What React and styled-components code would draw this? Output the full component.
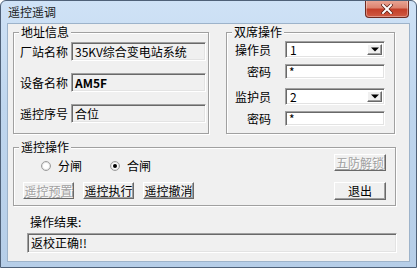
import React from "react";
import styled, { createGlobalStyle } from "styled-components";

const Global = createGlobalStyle`
  html, body { margin: 0; padding: 0; background: #ffffff; }
  body { font-family: "Noto Sans CJK SC", "Noto Sans", sans-serif; font-size: 12px; color: #000; }
  * { box-sizing: border-box; }
`;

const Window = styled.div`
  width: 417px;
  height: 268px;
  border: 1px solid #4f6178;
  border-radius: 6px 6px 0 0;
  background: linear-gradient(#cfe2f6 0%, #bfd6ee 40%, #b6cee8 100%);
  padding: 0 6px 5px 6px;
  display: flex;
  flex-direction: column;
  overflow: hidden;
`;

const TitleBar = styled.div`
  height: 22px;
  display: flex;
  align-items: flex-start;
  justify-content: space-between;
`;

const TitleText = styled.div`
  margin: 4px 0 0 1px;
  line-height: 14px;
  font-size: 12px;
  color: #1a1a1a;
`;

const CloseButton = styled.div`
  width: 44px;
  height: 18px;
  margin: -1px 1px 0 0;
  border: 1px solid #6e2a20;
  border-top: none;
  border-radius: 0 0 4px 4px;
  background: linear-gradient(#eaa898 0%, #dd8470 45%, #c43f29 55%, #cf5a43 100%);
  box-shadow: inset 0 0 0 1px rgba(255, 255, 255, 0.35);
  display: flex;
  align-items: center;
  justify-content: center;
`;

const Client = styled.div`
  flex: 1;
  background: #f0f0f0;
  border: 1px solid #9db3ca;
  padding: 0 0 0 5px;
  display: flex;
  flex-direction: column;
`;

const TopRow = styled.div`
  display: flex;
  gap: 17px;
  margin-top: 8px;
`;

const Group = styled.div`
  width: ${(p) => p.$w}px;
  height: ${(p) => p.$h}px;
  margin-top: ${(p) => p.$mt || 0}px;
  border: 1px solid #a0a0a0;
  box-shadow: inset 1px 1px #ffffff, 1px 1px #ffffff;
  display: flex;
  flex-direction: column;
`;

const Caption = styled.div`
  align-self: flex-start;
  margin: -8px 0 0 5px;
  padding: 0 2px;
  line-height: 14px;
  background: #f0f0f0;
`;

const Rows = styled.div`
  display: flex;
  flex-direction: column;
  gap: ${(p) => p.$gap}px;
  padding: ${(p) => p.$pad};
`;

const Row = styled.div`
  display: flex;
  align-items: center;
  gap: ${(p) => p.$gap || 0}px;
`;

const Label = styled.div`
  width: ${(p) => p.$w}px;
  text-align: ${(p) => p.$align || "left"};
  line-height: 14px;
  white-space: nowrap;
`;

const Field = styled.div`
  width: ${(p) => p.$w}px;
  height: ${(p) => p.$h}px;
  background: ${(p) => (p.$white ? "#ffffff" : "#f0f0f0")};
  border: 1px solid;
  border-color: #a0a0a0 #ffffff #ffffff #a0a0a0;
  box-shadow: inset 1px 1px #696969, inset -1px -1px #e3e3e3;
  padding: 0 3px;
  display: flex;
  align-items: center;
  line-height: 14px;
  font-weight: ${(p) => (p.$bold ? 600 : 400)};
  white-space: nowrap;
  overflow: hidden;
`;

const Combo = styled.div`
  width: ${(p) => p.$w}px;
  height: ${(p) => p.$h}px;
  background: #ffffff;
  border: 1px solid;
  border-color: #a0a0a0 #ffffff #ffffff #a0a0a0;
  box-shadow: inset 1px 1px #696969, inset -1px -1px #e3e3e3;
  padding: 2px;
  display: flex;
  align-items: stretch;
`;

const ComboText = styled.div`
  flex: 1;
  padding-left: 2px;
  display: flex;
  align-items: center;
  line-height: 14px;
`;

const DropButton = styled.div`
  width: 15px;
  background: #f0f0f0;
  border: 1px solid;
  border-color: #ffffff #696969 #696969 #ffffff;
  box-shadow: inset -1px -1px #a0a0a0;
  display: flex;
  align-items: center;
  justify-content: center;
`;

const BottomContent = styled.div`
  display: flex;
  justify-content: space-between;
  padding: 0 9px 0 9px;
`;

const LeftCol = styled.div`
  display: flex;
  flex-direction: column;
  padding-top: 6px;
  gap: 10px;
`;

const RightCol = styled.div`
  display: flex;
  flex-direction: column;
  gap: 11px;
`;

const RadioRow = styled.div`
  display: flex;
  align-items: center;
  gap: 28px;
  padding-left: 18px;
  height: 12px;
`;

const RadioItem = styled.div`
  display: flex;
  align-items: center;
  gap: 7px;
  line-height: 14px;
`;

const RadioCircle = styled.span`
  width: 10px;
  height: 10px;
  border-radius: 50%;
  background: #ffffff;
  border: 1px solid #9c9c9c;
  box-shadow: inset 0 0 0 1px #e2e2e2;
  display: flex;
  align-items: center;
  justify-content: center;
  &::after {
    content: "";
    width: 4px;
    height: 4px;
    border-radius: 50%;
    background: ${(p) => (p.$checked ? "#000" : "transparent")};
  }
`;

const ButtonRow = styled.div`
  display: flex;
  gap: 9px;
`;

const Button = styled.div`
  width: ${(p) => p.$w}px;
  height: ${(p) => p.$h}px;
  background: #f0f0f0;
  border: 1px solid;
  border-color: #ffffff #696969 #696969 #ffffff;
  box-shadow: inset -1px -1px #a0a0a0;
  display: flex;
  align-items: center;
  justify-content: center;
  line-height: 14px;
  white-space: nowrap;
  color: ${(p) => (p.$disabled ? "#a0a0a0" : "#000")};
  text-shadow: ${(p) => (p.$disabled ? "1px 1px #ffffff" : "none")};
`;

const ResultLabel = styled.div`
  margin: 9px 0 0 17px;
  line-height: 14px;
`;

const ResultField = styled(Field)`
  margin: 4px 0 0 14px;
`;

const Arrow = () => (
  <svg width="8" height="5" viewBox="0 0 8 5">
    <path d="M0 0.5 H8 L4 4.5 Z" fill="#000" />
  </svg>
);

export default function App() {
  return (
    <>
      <Global />
      <Window>
        <TitleBar>
          <TitleText>遥控遥调</TitleText>
          <CloseButton>
            <svg width="12" height="10" viewBox="0 0 12 10">
              <path d="M2 1 L10 9 M10 1 L2 9" stroke="#5a1d14" strokeWidth="3.4" strokeLinecap="square" />
              <path d="M2 1 L10 9 M10 1 L2 9" stroke="#ffffff" strokeWidth="2" strokeLinecap="square" />
            </svg>
          </CloseButton>
        </TitleBar>
        <Client>
          <TopRow>
            <Group $w={196} $h={102}>
              <Caption>地址信息</Caption>
              <Rows $gap={12} $pad="3px 0 0 6px">
                <Row>
                  <Label $w={51}>厂站名称</Label>
                  <Field $w={135} $h={19}>35KV综合变电站系统</Field>
                </Row>
                <Row>
                  <Label $w={51}>设备名称</Label>
                  <Field $w={135} $h={19} $bold>AM5F</Field>
                </Row>
                <Row>
                  <Label $w={51}>遥控序号</Label>
                  <Field $w={135} $h={19}>合位</Field>
                </Row>
              </Rows>
            </Group>
            <Group $w={169} $h={102}>
              <Caption>双席操作</Caption>
              <Rows $gap={9} $pad="2px 0 0 0">
                <Rows $gap={6} $pad="0">
                  <Row $gap={14}>
                    <Label $w={44} $align="right">操作员</Label>
                    <Combo $w={100} $h={17}>
                      <ComboText>1</ComboText>
                      <DropButton><Arrow /></DropButton>
                    </Combo>
                  </Row>
                  <Row $gap={14}>
                    <Label $w={44} $align="right">密码</Label>
                    <Field $w={100} $h={15} $white>*</Field>
                  </Row>
                </Rows>
                <Rows $gap={6} $pad="0">
                  <Row $gap={14}>
                    <Label $w={44} $align="right">监护员</Label>
                    <Combo $w={100} $h={17}>
                      <ComboText>2</ComboText>
                      <DropButton><Arrow /></DropButton>
                    </Combo>
                  </Row>
                  <Row $gap={14}>
                    <Label $w={44} $align="right">密码</Label>
                    <Field $w={100} $h={15} $white>*</Field>
                  </Row>
                </Rows>
              </Rows>
            </Group>
          </TopRow>
          <Group $w={383} $h={59} $mt={13}>
            <Caption>遥控操作</Caption>
            <BottomContent>
              <LeftCol>
                <RadioRow>
                  <RadioItem><RadioCircle />分闸</RadioItem>
                  <RadioItem><RadioCircle $checked />合闸</RadioItem>
                </RadioRow>
                <ButtonRow>
                  <Button $w={51} $h={17} $disabled>遥控预置</Button>
                  <Button $w={51} $h={17}>遥控执行</Button>
                  <Button $w={51} $h={17}>遥控撤消</Button>
                </ButtonRow>
              </LeftCol>
              <RightCol>
                <Button $w={52} $h={17} $disabled>五防解锁</Button>
                <Button $w={52} $h={18}>退出</Button>
              </RightCol>
            </BottomContent>
          </Group>
          <ResultLabel>操作结果:</ResultLabel>
          <ResultField $w={370} $h={20}>返校正确!!</ResultField>
        </Client>
      </Window>
    </>
  );
}
